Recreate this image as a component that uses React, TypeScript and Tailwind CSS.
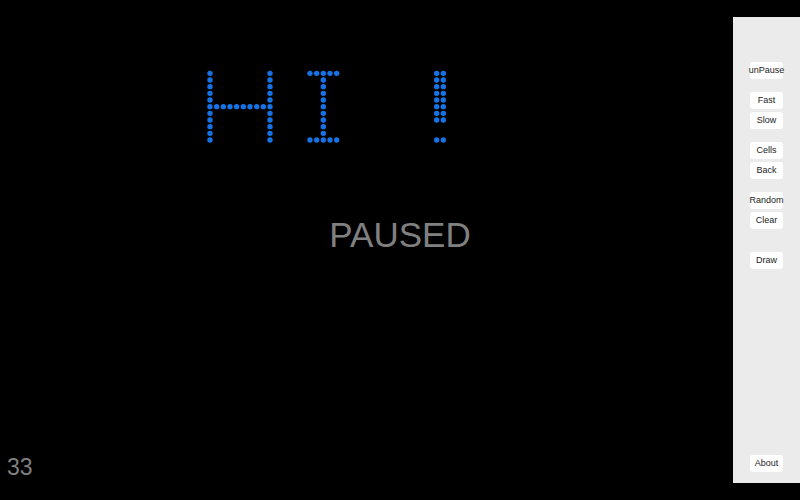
import React from 'react';

const CELL = 20 / 3;
const TOP = 73.33;

// HI! pattern: [column, row]
function buildDots() {
  const dots: [number, number][] = [];
  // H
  for (let r = 0; r <= 10; r++) {
    dots.push([31, r]);
    dots.push([40, r]);
  }
  for (let c = 32; c <= 39; c++) dots.push([c, 5]);
  // I
  for (let c = 46; c <= 50; c++) {
    dots.push([c, 0]);
    dots.push([c, 10]);
  }
  for (let r = 1; r <= 9; r++) dots.push([48, r]);
  // !
  for (let r = 0; r <= 7; r++) {
    dots.push([65, r]);
    dots.push([66, r]);
  }
  dots.push([65, 10]);
  dots.push([66, 10]);
  return dots;
}

const dots = buildDots();

function SideButton({ label, className = '' }: { label: string; className?: string }) {
  return (
    <button
      className={`w-[33px] h-[17px] rounded-[3px] bg-white text-[9px] leading-none text-[#222] flex items-center justify-center whitespace-nowrap ${className}`}
    >
      {label}
    </button>
  );
}

export default function App() {
  return (
    <div
      className="relative w-[800px] h-[500px] bg-black overflow-hidden flex justify-end"
      style={{ fontFamily: '"Liberation Sans", Arial, sans-serif' }}
    >
      {/* canvas */}
      <svg className="absolute inset-0" width={800} height={500} viewBox="0 0 800 500">
        {dots.map(([c, r], i) => (
          <circle key={i} cx={(c + 0.5) * CELL} cy={TOP + r * CELL} r={2.7} fill="#1673e6" />
        ))}
      </svg>

      <div className="absolute left-0 right-0 top-[212px] text-center text-[35px] leading-[46px] text-[#808080]">
        PAUSED
      </div>

      <div className="absolute left-[7px] top-[453px] text-[23px] leading-[28px] text-[#808080]">33</div>

      {/* sidebar */}
      <div className="relative w-[67px] my-[17px] bg-[#ebebeb] flex flex-col items-center pt-[45px] pb-[11px]">
        <SideButton label="unPause" />
        <SideButton label="Fast" className="mt-[13px]" />
        <SideButton label="Slow" className="mt-[3px]" />
        <SideButton label="Cells" className="mt-[13px]" />
        <SideButton label="Back" className="mt-[3px]" />
        <SideButton label="Random" className="mt-[13px]" />
        <SideButton label="Clear" className="mt-[3px]" />
        <SideButton label="Draw" className="mt-[23px]" />
        <SideButton label="About" className="mt-auto" />
      </div>
    </div>
  );
}
